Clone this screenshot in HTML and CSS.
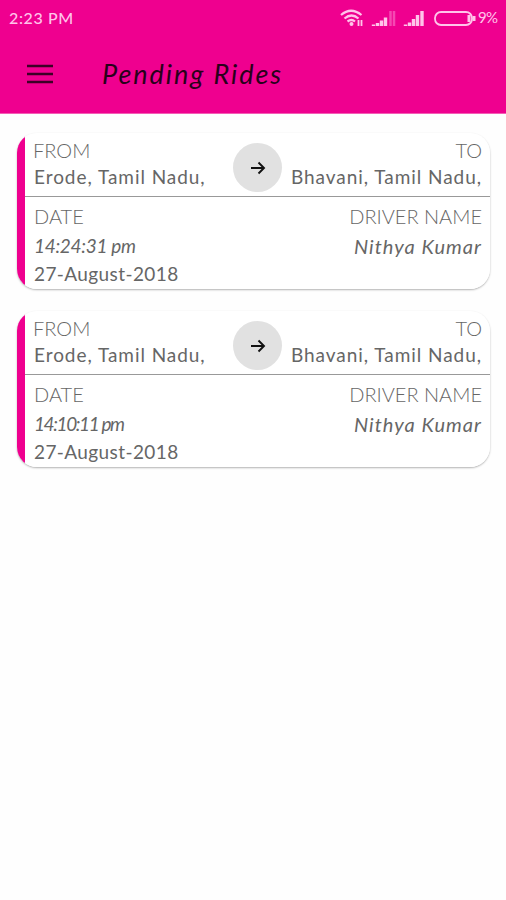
FILE: index.html
```html
<!doctype html>
<html lang="en">
<head>
    <meta charset="UTF-8">
    <meta name="viewport" content="width=device-width, initial-scale=1.0">
    <title>Pending Rides</title>
    <link rel="stylesheet" href="styles.css">
</head>
<body>
<header class="header">
    <div class="status_bar">
        <span class="clock">2:23 PM</span>
        <svg class="status_icons" width="136" height="20" viewBox="0 0 136 20" fill="none" stroke="#ffc4ea">
            <path d="M1 7Q11 -1.500 21.500 7M4.500 10.500Q11.500 4.500 18.500 10.500M7.500 13.500Q11.500 10.500 15 13.500" stroke-width="2.200"/>
            <circle cx="11.500" cy="16" r="2" fill="#ffc4ea" stroke="none"/>
            <path d="M18.500 12V18M21.500 12V18" stroke-width="1.800"/>
            <path d="M33.500 18V16.500M37.500 18V15M41.500 18V12.500M45.500 18V9.500M65.500 18V16.500M69.500 18V14.500M73.500 18V11M77.500 18V7M82 18V3" stroke-width="3.400"/>
            <path d="M50.500 18V3M54 18V3" stroke-width="2.500" stroke="#f548b2"/>
            <rect x="95" y="4" width="37" height="13" rx="6" stroke-width="1.800"/>
            <path d="M129 7V14M134 8V13" stroke-width="3"/>
        </svg>
        <span class="battery">9%</span>
    </div>
    <div class="toolbar">
        <svg class="menu" width="28" height="20" viewBox="0 0 28 20">
            <path d="M1 2H27M1 10H27M1 18H27" stroke="#3c0026" stroke-width="2.600"/>
        </svg>
        <h1 class="title">Pending Rides</h1>
    </div>
</header>

<main class="rides">
    <section class="ride">
        <div class="route">
            <div class="place">
                <div class="label from">FROM</div>
                <div class="value city">Erode, Tamil Nadu,</div>
            </div>
            <div class="arrow">
                <svg width="16" height="14" viewBox="0 0 16 14" fill="none" stroke="#111" stroke-width="1.900">
                    <path d="M1 7H14M8.500 1.500L14 7L8.500 12.500"/>
                </svg>
            </div>
            <div class="place right">
                <div class="label to">TO</div>
                <div class="value city_to">Bhavani, Tamil Nadu,</div>
            </div>
        </div>
        <div class="details">
            <div class="when">
                <div class="label date_label">DATE</div>
                <div class="value time">14:24:31 pm</div>
                <div class="value date">27-August-2018</div>
            </div>
            <div class="driver right">
                <div class="label driver_label">DRIVER NAME</div>
                <div class="value name">Nithya Kumar</div>
            </div>
        </div>
    </section>

    <section class="ride">
        <div class="route">
            <div class="place">
                <div class="label from">FROM</div>
                <div class="value city">Erode, Tamil Nadu,</div>
            </div>
            <div class="arrow">
                <svg width="16" height="14" viewBox="0 0 16 14" fill="none" stroke="#111" stroke-width="1.900">
                    <path d="M1 7H14M8.500 1.500L14 7L8.500 12.500"/>
                </svg>
            </div>
            <div class="place right">
                <div class="label to">TO</div>
                <div class="value city_to">Bhavani, Tamil Nadu,</div>
            </div>
        </div>
        <div class="details">
            <div class="when">
                <div class="label date_label">DATE</div>
                <div class="value time narrow">14:10:11 pm</div>
                <div class="value date">27-August-2018</div>
            </div>
            <div class="driver right">
                <div class="label driver_label">DRIVER NAME</div>
                <div class="value name">Nithya Kumar</div>
            </div>
        </div>
    </section>
</main>
</body>
</html>
```

FILE: styles.css
```css
* {
    box-sizing: border-box;
}

body {
    margin: 0;
    min-height: 900px;
    background-color: #fefefe;
    font-family: Lato, "Liberation Sans", sans-serif;
    color: #666;
}

.header {
    height: 114px;
    background-color: #ef008f;
    border-bottom: 1px solid #f45cb5;
}

.status_bar {
    display: flex;
    align-items: center;
    height: 34px;
    padding: 0 8px 0 9px;
    color: #ffc4ea;
}

.clock {
    font-size: 16px;
    letter-spacing: 0.6px;
    font-weight: 500;
}

.status_icons {
    margin: 1px 2px 0 auto;
}

.battery {
    width: 20px;
    font-size: 15px;
    letter-spacing: -0.6px;
    white-space: nowrap;
}

.toolbar {
    display: flex;
    align-items: center;
    height: 80px;
    padding: 0 26px;
}

.menu {
    display: block;
}

.title {
    margin: 0 0 0 48px;
    font-size: 27px;
    line-height: 32px;
    font-weight: 400;
    font-style: italic;
    letter-spacing: 1.95px;
    color: #28001a;
}

.rides {
    padding: 19px 16px 0 17px;
}

.ride {
    height: 156px;
    margin-bottom: 22px;
    border-left: 8px solid transparent;
    border-radius: 20px;
    background: linear-gradient(to right, #ef008f 8px, #fff 8px) border-box;
    box-shadow: 0 1px 2px rgba(0, 0, 0, 0.3);
}

.route {
    display: flex;
    position: relative;
    justify-content: space-between;
    height: 64px;
    padding: 5px 8px 0 9px;
    border-bottom: 1px solid #999;
}

.arrow {
    display: flex;
    position: absolute;
    left: 208px;
    top: 10px;
    align-items: center;
    justify-content: center;
    width: 49px;
    height: 49px;
    border-radius: 50%;
    background-color: #e1e1e1;
}

.details {
    display: flex;
    justify-content: space-between;
    padding: 5px 8px 0 9px;
}

.right {
    text-align: right;
}

.label {
    height: 26px;
    font-size: 20px;
    line-height: 24px;
    font-weight: 300;
    white-space: nowrap;
}

.from {
    margin-left: -1px;
}

.value {
    height: 28px;
    font-size: 19px;
    line-height: 28px;
    white-space: nowrap;
}

.place .value {
    height: 26px;
    line-height: 26px;
}

.city,
.city_to {
    letter-spacing: 0.95px;
}

.details .label {
    height: 30px;
    line-height: 29px;
}

.time,
.name {
    font-style: italic;
}

.time {
    letter-spacing: -0.3px;
}

.narrow {
    letter-spacing: -1.4px;
}

.name {
    font-size: 20px;
    letter-spacing: 1.05px;
}

.date {
    letter-spacing: 0.4px;
}
```
